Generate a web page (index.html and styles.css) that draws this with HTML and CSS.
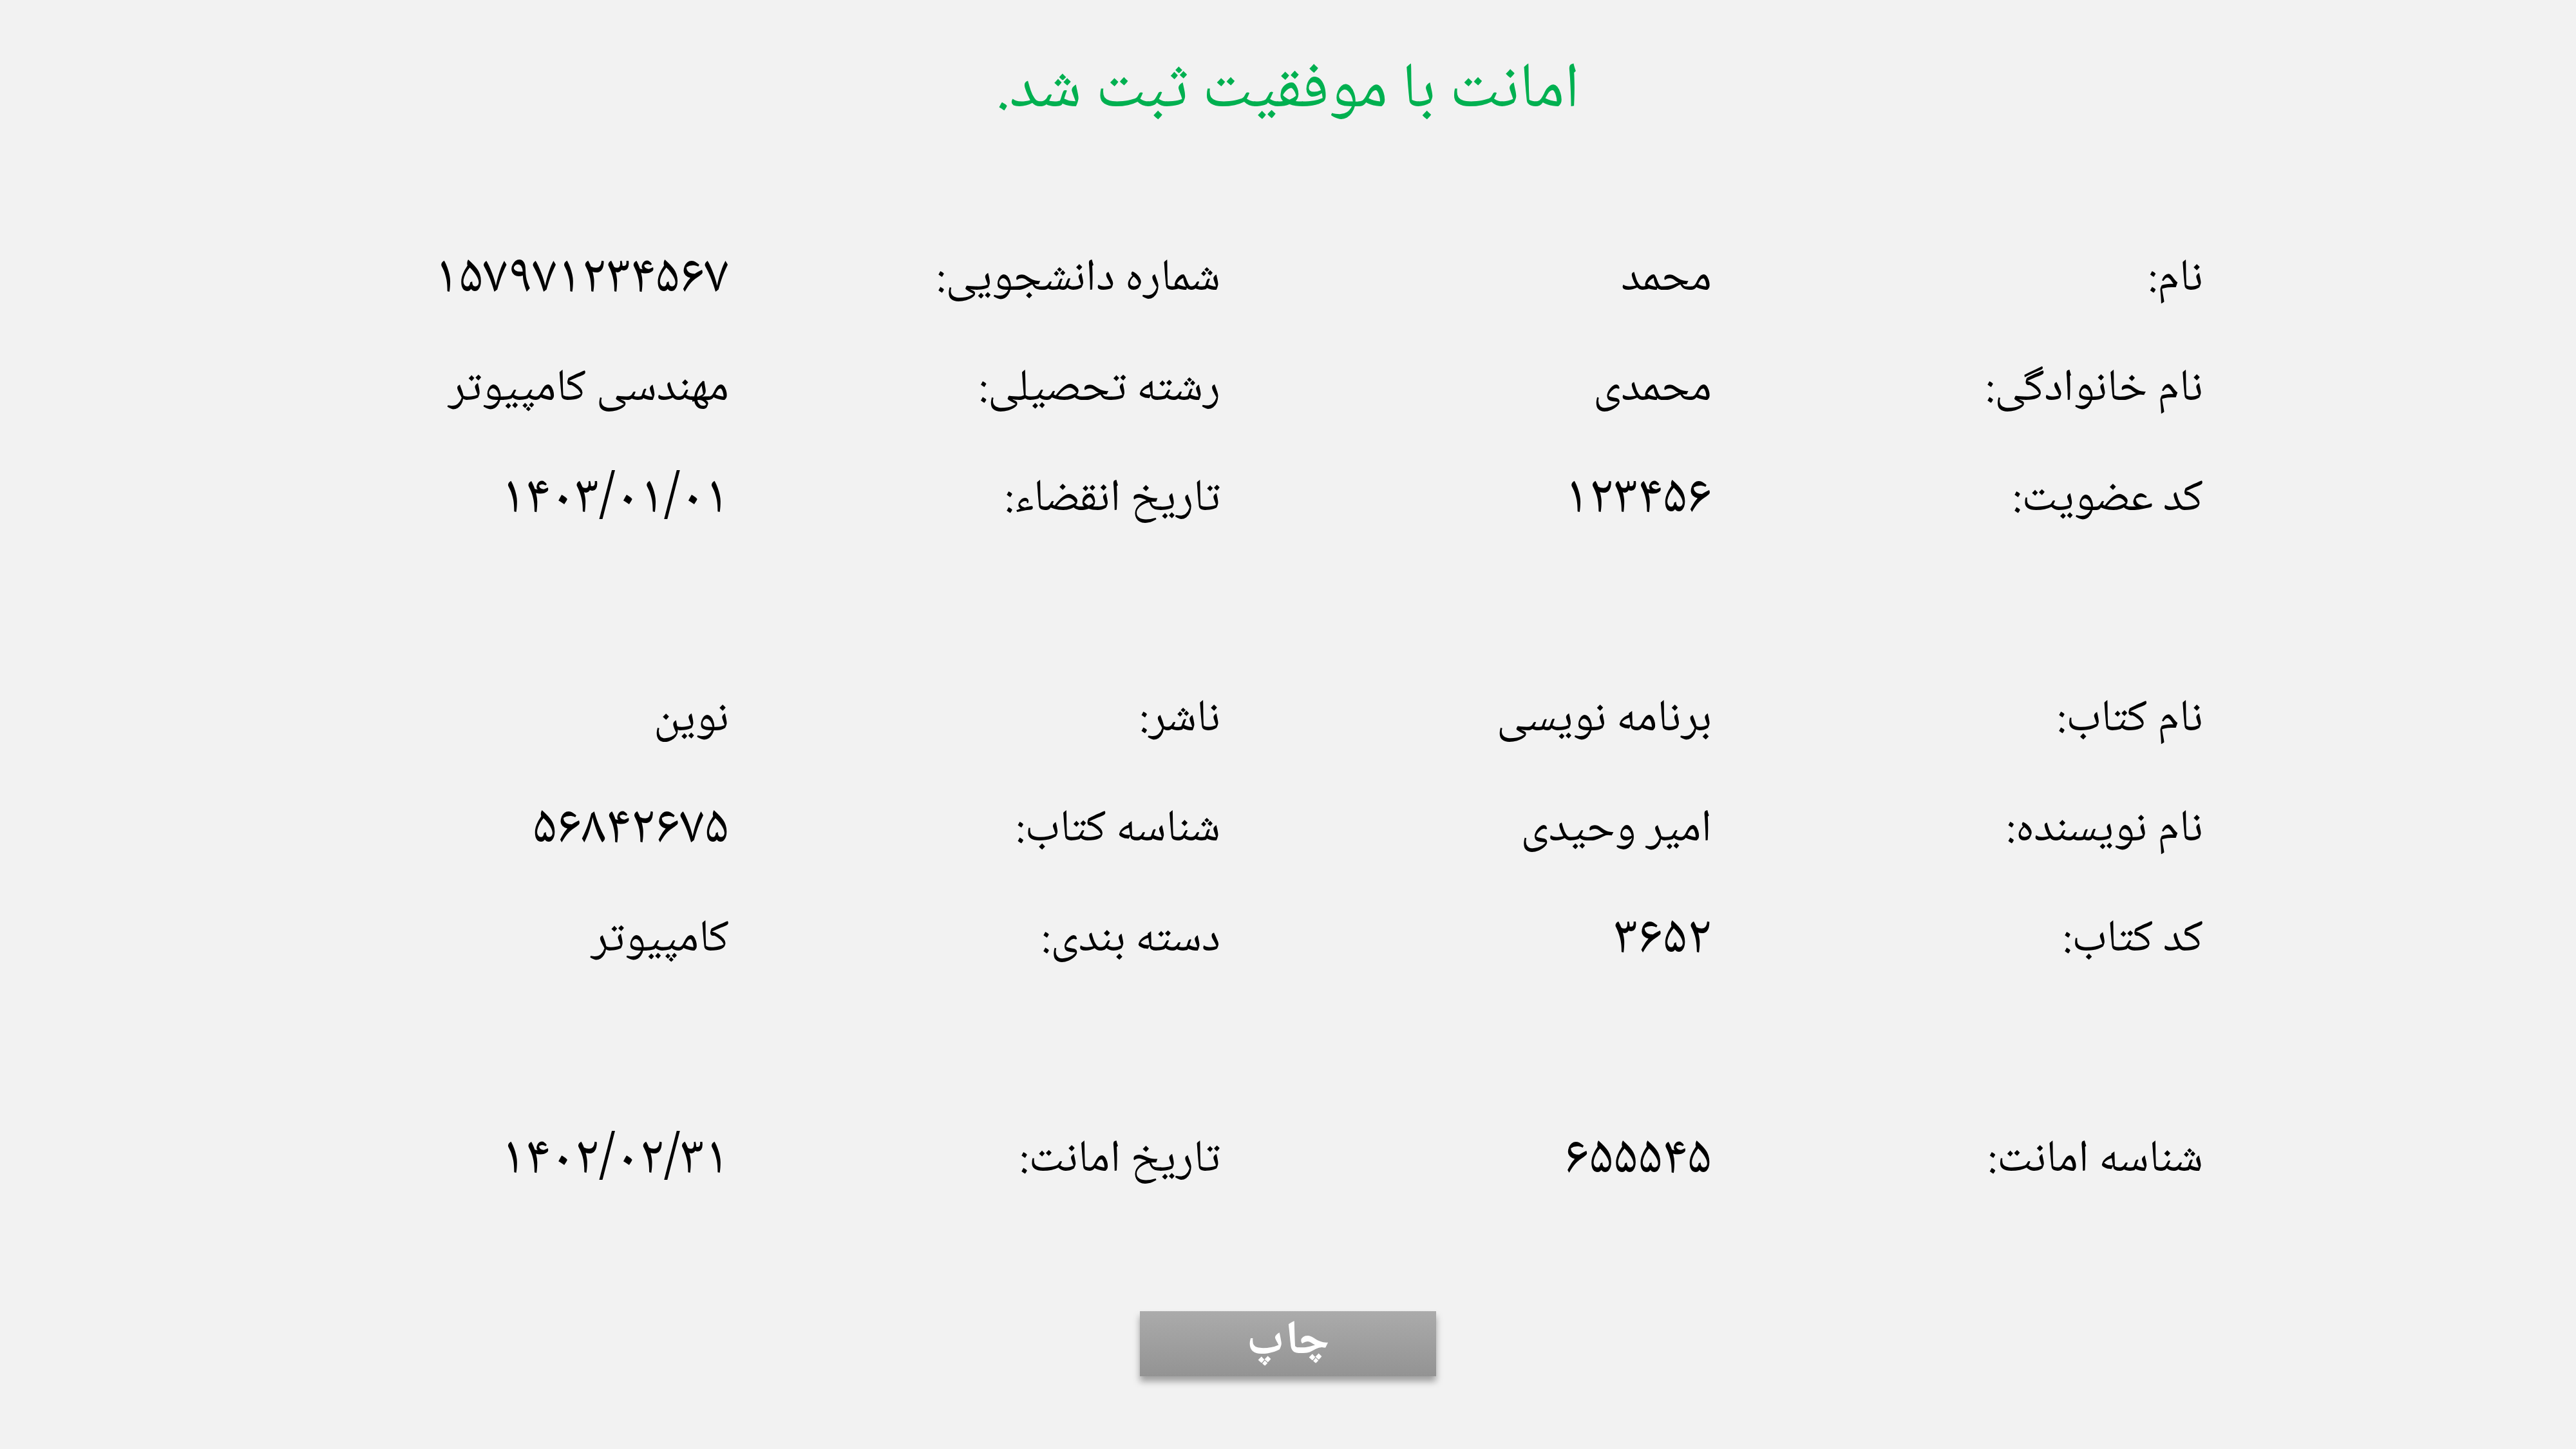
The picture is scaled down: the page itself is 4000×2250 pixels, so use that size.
FILE: index.html
```html
<!DOCTYPE html>
<html lang="fa" dir="rtl">
<head>
<meta charset="utf-8">
<title>امانت</title>
<link rel="stylesheet" href="styles.css">
</head>
<body>
<main class="page">
  <h1 class="title">امانت با موفقیت ثبت شد.</h1>

  <section class="grid">
    <div class="label">نام:</div><div class="value">محمد</div>
    <div class="label">شماره دانشجویی:</div><div class="value num">۱۵۷۹۷۱۲۳۴۵۶۷</div>
    <div class="label">نام خانوادگی:</div><div class="value">محمدی</div>
    <div class="label">رشته تحصیلی:</div><div class="value">مهندسی کامپیوتر</div>
    <div class="label">کد عضویت:</div><div class="value num">۱۲۳۴۵۶</div>
    <div class="label">تاریخ انقضاء:</div><div class="value num">۱۴۰۳/۰۱/۰۱</div>
  </section>

  <section class="grid">
    <div class="label">نام کتاب:</div><div class="value">برنامه نویسی</div>
    <div class="label">ناشر:</div><div class="value">نوین</div>
    <div class="label">نام نویسنده:</div><div class="value">امیر وحیدی</div>
    <div class="label">شناسه کتاب:</div><div class="value num">۵۶۸۴۲۶۷۵</div>
    <div class="label">کد کتاب:</div><div class="value num">۳۶۵۲</div>
    <div class="label">دسته بندی:</div><div class="value">کامپیوتر</div>
  </section>

  <section class="grid">
    <div class="label">شناسه امانت:</div><div class="value num">۶۵۵۵۴۵</div>
    <div class="label">تاریخ امانت:</div><div class="value num">۱۴۰۲/۰۲/۳۱</div>
  </section>

  <div class="actions">
    <button class="print-btn" type="button">چاپ</button>
  </div>
</main>
</body>
</html>
```
FILE: styles.css
```css
html, body {
  margin: 0;
  padding: 0;
}
body {
  background: #f2f2f2;
  color: #000;
  font-family: "Noto Naskh Arabic", "Noto Sans Arabic", "DejaVu Sans", sans-serif;
  width: 4000px;
  height: 2250px;
  overflow: hidden;
}
.page {
  display: flex;
  flex-direction: column;
  padding: 0 579px 0 367px;
}
.title {
  margin: 0 -579px 0 -367px;
  height: 349px;
  line-height: 288px;
  text-align: center;
  font-size: 99px;
  font-weight: normal;
  color: #00b050;
}
.grid {
  display: grid;
  grid-template-columns: repeat(4, 763px);
  grid-auto-rows: 171px;
  align-items: center;
  font-size: 70px;
  margin-bottom: 171px;
}
.grid:nth-of-type(3) {
  margin-bottom: 0;
}
.label, .value {
  text-align: right;
  white-space: nowrap;
}
.num {
  font-size: 85px;
}
.actions {
  display: flex;
  justify-content: center;
  margin: 148px -579px 0 -367px;
}
.print-btn {
  width: 460px;
  height: 101px;
  border: none;
  background: linear-gradient(#ababab, #939393);
  box-shadow: 0 8px 10px rgba(0,0,0,0.35);
  color: #fff;
  font-family: inherit;
  font-size: 74px;
  line-height: 101px;
  font-weight: bold;
  padding: 0;
}
```
